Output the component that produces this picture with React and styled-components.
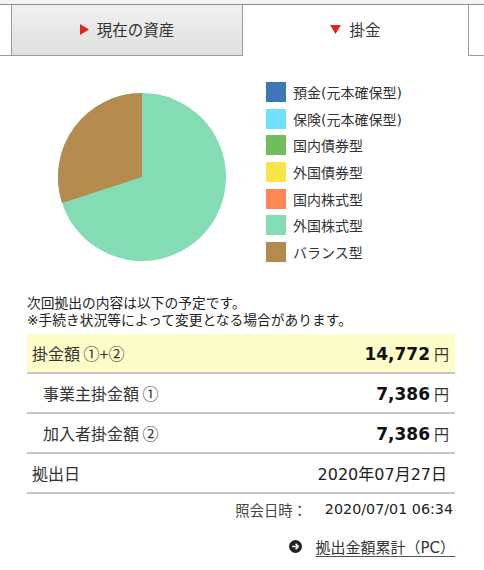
import React from "react";
import styled, { createGlobalStyle } from "styled-components";

const GlobalStyle = createGlobalStyle`
  body {
    margin: 0;
    background: #fff;
    font-family: "DejaVu Sans", "Noto Sans CJK JP", sans-serif;
    color: #333;
  }
`;

const legend = [
  { label: "預金(元本確保型)", color: "#3d77b7" },
  { label: "保険(元本確保型)", color: "#6de1fd" },
  { label: "国内債券型", color: "#70be5b" },
  { label: "外国債券型", color: "#fae549" },
  { label: "国内株式型", color: "#ff8755" },
  { label: "外国株式型", color: "#84dcb5" },
  { label: "バランス型", color: "#b48a4f" },
];

const rows = [
  { label: "掛金額 ①+②", value: "14,772", unit: "円", highlight: true },
  { label: "事業主掛金額 ①", value: "7,386", unit: "円", indent: true },
  { label: "加入者掛金額 ②", value: "7,386", unit: "円", indent: true },
  { label: "拠出日", date: "2020年07月27日" },
];

export default function App() {
  return (
    <Page>
      <GlobalStyle />
      <Strip />
      <TabBar>
        <Tab>
          <svg width="9" height="11" viewBox="0 0 9 11">
            <polygon points="0,0 9,5.5 0,11" fill="#e0261f" />
          </svg>
          現在の資産
        </Tab>
        <Tab $active>
          <svg width="11" height="9" viewBox="0 0 11 9">
            <polygon points="0,0 11,0 5.5,9" fill="#e0261f" />
          </svg>
          掛金
        </Tab>
      </TabBar>

      <ChartArea>
        <Pie width="168" height="168" viewBox="0 0 168 168">
          <circle cx="84" cy="84" r="84" fill="#84dcb5" />
          <path d="M84,84 L84,0 A84,84 0 0 0 4.1,110 Z" fill="#b48a4f" />
        </Pie>
        <Legend>
          {legend.map((item) => (
            <LegendItem key={item.label}>
              <Swatch $color={item.color} />
              {item.label}
            </LegendItem>
          ))}
        </Legend>
      </ChartArea>

      <Intro>
        次回拠出の内容は以下の予定です。
        <br />
        ※手続き状況等によって変更となる場合があります。
      </Intro>

      <Table>
        {rows.map((row) => (
          <Row key={row.label} $highlight={row.highlight}>
            <Label $indent={row.indent}>{row.label}</Label>
            {row.date ? (
              <DateText>{row.date}</DateText>
            ) : (
              <Amount>
                <strong>{row.value}</strong>
                <Unit>{row.unit}</Unit>
              </Amount>
            )}
          </Row>
        ))}
      </Table>

      <Stamp>
        <span>照会日時：</span>
        <span>2020/07/01 06:34</span>
      </Stamp>

      <LinkRow>
        <svg width="13" height="13" viewBox="0 0 13 13">
          <circle cx="6.5" cy="6.5" r="6.5" fill="#222" />
          <path
            d="M3.2,6.5 H9.3 M6.6,3.8 L9.3,6.5 L6.6,9.2"
            stroke="#fff"
            strokeWidth="1.6"
            fill="none"
          />
        </svg>
        <Link href="#">拠出金額累計（PC）</Link>
      </LinkRow>
    </Page>
  );
}

const Page = styled.div`
  width: 484px;
  min-height: 570px;
`;

const Strip = styled.div`
  height: 4px;
  background: #f4f4f4;
`;

const TabBar = styled.div`
  display: flex;
  padding: 0 15px 0 11px;
  border-top: 1px solid #8c8c8c;
  border-bottom: 1px solid #9a9a9a;
  height: 50px;
`;

const Tab = styled.div`
  flex: ${(p) => (p.$active ? "0 0 226px" : "0 0 232px")};
  box-sizing: border-box;
  height: ${(p) => (p.$active ? "51px" : "50px")};
  display: flex;
  align-items: center;
  justify-content: center;
  gap: 8px;
  padding-bottom: 3px;
  font-size: 15.5px;
  color: #333;
  background: ${(p) =>
    p.$active ? "#fff" : "linear-gradient(#f0f0f0, #e0e0e0)"};
  border-left: ${(p) => (p.$active ? "none" : "1px solid #9a9a9a")};
  border-right: 1px solid #9a9a9a;
  svg {
    margin-top: 1px;
  }
`;

const ChartArea = styled.div`
  display: flex;
  align-items: flex-start;
  padding-left: 58px;
`;

const Pie = styled.svg`
  margin-top: 37px;
  flex: none;
`;

const Legend = styled.ul`
  list-style: none;
  margin: 26px 0 0 40px;
  padding: 0;
  display: flex;
  flex-direction: column;
  gap: 6.7px;
`;

const LegendItem = styled.li`
  display: flex;
  align-items: center;
  gap: 7px;
  height: 20px;
  font-size: 14px;
  color: #333;
`;

const Swatch = styled.span`
  width: 20px;
  height: 20px;
  background: ${(p) => p.$color};
`;

const Intro = styled.p`
  margin: 33px 0 0 27px;
  font-size: 13.75px;
  line-height: 16.5px;
  color: #222;
`;

const Table = styled.div`
  margin: 6px 0 0 27px;
  width: 428px;
`;

const Row = styled.div`
  box-sizing: border-box;
  height: 40px;
  display: flex;
  align-items: center;
  justify-content: space-between;
  padding-right: 6px;
  border-bottom: 2px solid #c6c6c6;
  background: ${(p) => (p.$highlight ? "#fdfdc9" : "transparent")};
`;

const Label = styled.span`
  padding-left: ${(p) => (p.$indent ? "16px" : "5px")};
  font-family: "Noto Sans CJK JP", sans-serif;
  font-size: 16px;
  color: #333;
`;

const Amount = styled.span`
  display: flex;
  align-items: baseline;
  gap: 4px;
  strong {
    font-size: 17px;
    font-weight: bold;
    color: #111;
  }
`;

const Unit = styled.span`
  font-size: 15px;
  color: #333;
`;

const DateText = styled.span`
  font-size: 16px;
  color: #222;
  padding-right: 2px;
`;

const Stamp = styled.div`
  margin: 5px 31px 0 0;
  height: 20px;
  display: flex;
  justify-content: flex-end;
  align-items: center;
  gap: 18px;
  font-size: 14.3px;
  color: #222;
  span:first-child {
    color: #444;
  }
`;

const LinkRow = styled.div`
  margin: 17px 29px 0 0;
  height: 20px;
  display: flex;
  justify-content: flex-end;
  align-items: center;
  gap: 13px;
`;

const Link = styled.a`
  font-size: 15px;
  color: #333;
  text-decoration: underline;
  text-decoration-color: #555;
  text-underline-offset: 3px;
`;
